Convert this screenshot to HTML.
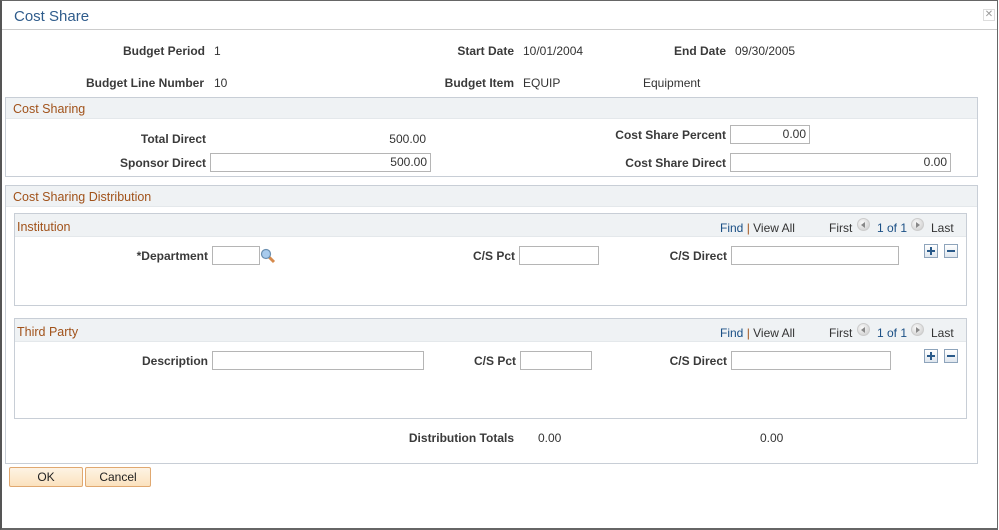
<!DOCTYPE html>
<html><head><meta charset="utf-8"><style>
*{box-sizing:border-box;margin:0;padding:0}
body{width:999px;height:530px;background:#fff;font-family:"Liberation Sans",Arial,sans-serif;font-size:12px;color:#333;position:relative;overflow:hidden}
.a{position:absolute;white-space:nowrap;line-height:14px;margin-top:1px}
.l{font-weight:bold;color:#3a3a3a;text-align:right}
.box{position:absolute;border:1px solid #c8ced6}
.hd{position:absolute;left:0;right:0;top:0;background:#eff2f4;border-bottom:1px solid #e4e8eb}
.ht{position:absolute;color:#a1521a;font-size:12.5px}
.in{position:absolute;border:1px solid #b5b5b5;background:#fff;text-align:right;padding-right:3px;line-height:17px}
.lk{color:#1a4f85}
.btn{position:absolute;border:1px solid #e0a870;background:linear-gradient(#fdf3e4,#fbe2be);text-align:center;line-height:19px;color:#222;border-radius:2px}
.pm{position:absolute;width:14px;height:14px;border:1px solid #8ea4bb;background:linear-gradient(#fff,#dfe6ee)}
.arr{position:absolute;width:13px;height:13px;border-radius:50%;background:radial-gradient(circle at 40% 35%,#fafafa,#c9c9c9);border:1px solid #ccc}
.arr::after{content:"";position:absolute;top:3px;width:0;height:0;border-top:3px solid transparent;border-bottom:3px solid transparent}
.al::after{left:3px;border-right:4px solid #888}
.ar::after{left:4px;border-left:4px solid #888}
</style></head><body>
<div style="position:absolute;left:0;top:0;width:998px;height:530px;border:1px solid #666;border-left:2px solid #555;border-bottom:2px solid #666"></div>
<div class="a" style="left:14px;top:7px;font-size:15px;line-height:18px;color:#2f5c8c">Cost Share</div>
<div style="position:absolute;left:2px;right:2px;top:29px;height:1px;background:#ccc"></div>
<div style="position:absolute;left:983px;top:9px;width:12px;height:12px;border:1px solid #ddd;color:#999;font-size:10px;line-height:10px;text-align:center">✕</div>

<div class="a l" style="right:794px;top:43px">Budget Period</div><div class="a" style="left:214px;top:43px">1</div>
<div class="a l" style="right:485px;top:43px">Start Date</div><div class="a" style="left:523px;top:43px">10/01/2004</div>
<div class="a l" style="right:273px;top:43px">End Date</div><div class="a" style="left:735px;top:43px">09/30/2005</div>
<div class="a l" style="right:795px;top:75px">Budget Line Number</div><div class="a" style="left:214px;top:75px">10</div>
<div class="a l" style="right:485px;top:75px">Budget Item</div><div class="a" style="left:523px;top:75px">EQUIP</div>
<div class="a" style="left:643px;top:75px">Equipment</div>

<div class="box" style="left:5px;top:97px;width:973px;height:80px"><div class="hd" style="height:21px"></div><div class="ht a" style="left:7px;top:3px">Cost Sharing</div></div>
<div class="a l" style="right:793px;top:131px">Total Direct</div><div class="a" style="right:573px;top:131px">500.00</div>
<div class="a l" style="right:793px;top:155px">Sponsor Direct</div><div class="in" style="left:210px;top:153px;width:221px;height:19px">500.00</div>
<div class="a l" style="right:273px;top:127px">Cost Share Percent</div><div class="in" style="left:730px;top:125px;width:80px;height:19px">0.00</div>
<div class="a l" style="right:273px;top:155px">Cost Share Direct</div><div class="in" style="left:730px;top:153px;width:221px;height:19px">0.00</div>

<div class="box" style="left:5px;top:185px;width:973px;height:279px"><div class="hd" style="height:21px"></div><div class="ht a" style="left:7px;top:3px">Cost Sharing Distribution</div></div>

<div class="box" style="left:14px;top:213px;width:953px;height:93px"><div class="hd" style="height:23px"></div><div class="ht a" style="left:2px;top:5px">Institution</div></div>
<div class="a" style="left:720px;top:220px"><span class="lk">Find</span> <span style="color:#a1521a">|</span> View All</div>
<div class="a" style="left:829px;top:220px">First</div><div class="arr al" style="left:857px;top:218px"></div>
<div class="a lk" style="left:877px;top:220px">1 of 1</div><div class="arr ar" style="left:911px;top:218px"></div>
<div class="a" style="left:931px;top:220px">Last</div>
<div class="a l" style="right:791px;top:248px">*Department</div><div class="in" style="left:212px;top:246px;width:48px;height:19px"></div>
<svg style="position:absolute;left:260px;top:248px" width="16" height="16"><line x1="9" y1="9" x2="14" y2="14" stroke="#d68a4c" stroke-width="3"/><circle cx="6" cy="6" r="4.5" fill="#a8cbed" stroke="#6a8fb0" stroke-width="1.2"/></svg>
<div class="a l" style="right:484px;top:248px">C/S Pct</div><div class="in" style="left:519px;top:246px;width:80px;height:19px"></div>
<div class="a l" style="right:272px;top:248px">C/S Direct</div><div class="in" style="left:731px;top:246px;width:168px;height:19px"></div>
<div class="pm" style="left:924px;top:244px"><div style="position:absolute;left:2px;top:5px;width:8px;height:2px;background:#2a5a8a"></div><div style="position:absolute;left:5px;top:2px;width:2px;height:8px;background:#2a5a8a"></div></div>
<div class="pm" style="left:944px;top:244px"><div style="position:absolute;left:2px;top:5px;width:8px;height:2px;background:#2a5a8a"></div></div>

<div class="box" style="left:14px;top:318px;width:953px;height:101px"><div class="hd" style="height:23px"></div><div class="ht a" style="left:2px;top:5px">Third Party</div></div>
<div class="a" style="left:720px;top:325px"><span class="lk">Find</span> <span style="color:#a1521a">|</span> View All</div>
<div class="a" style="left:829px;top:325px">First</div><div class="arr al" style="left:857px;top:323px"></div>
<div class="a lk" style="left:877px;top:325px">1 of 1</div><div class="arr ar" style="left:911px;top:323px"></div>
<div class="a" style="left:931px;top:325px">Last</div>
<div class="a l" style="right:791px;top:353px">Description</div><div class="in" style="left:212px;top:351px;width:212px;height:19px"></div>
<div class="a l" style="right:483px;top:353px">C/S Pct</div><div class="in" style="left:520px;top:351px;width:72px;height:19px"></div>
<div class="a l" style="right:272px;top:353px">C/S Direct</div><div class="in" style="left:731px;top:351px;width:160px;height:19px"></div>
<div class="pm" style="left:924px;top:349px"><div style="position:absolute;left:2px;top:5px;width:8px;height:2px;background:#2a5a8a"></div><div style="position:absolute;left:5px;top:2px;width:2px;height:8px;background:#2a5a8a"></div></div>
<div class="pm" style="left:944px;top:349px"><div style="position:absolute;left:2px;top:5px;width:8px;height:2px;background:#2a5a8a"></div></div>

<div class="a l" style="right:485px;top:430px">Distribution Totals</div>
<div class="a" style="left:538px;top:430px">0.00</div><div class="a" style="left:760px;top:430px">0.00</div>

<div class="btn" style="left:9px;top:467px;width:74px;height:20px">OK</div>
<div class="btn" style="left:85px;top:467px;width:66px;height:20px">Cancel</div>
</body></html>
